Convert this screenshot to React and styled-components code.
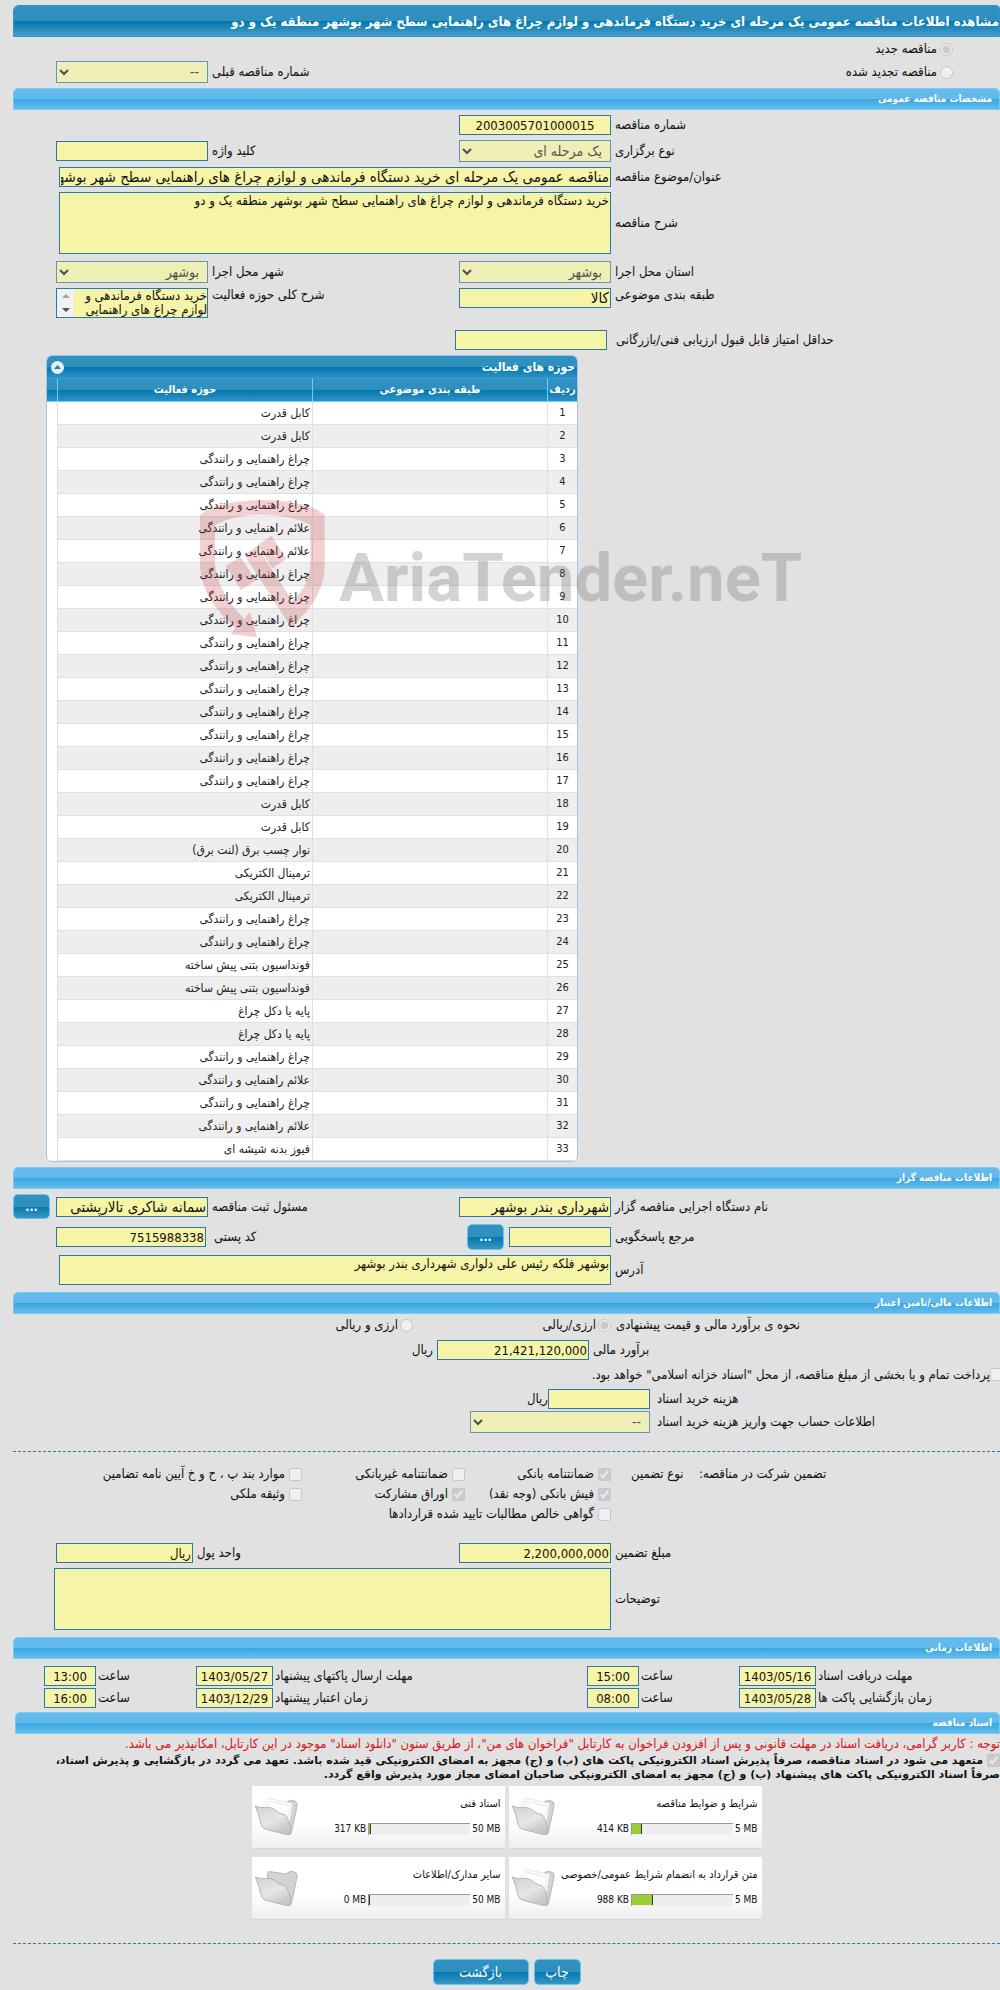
import React, { useId } from "react";
import styled, { createGlobalStyle, css } from "styled-components";

const FONT = `Tahoma, "DejaVu Sans Condensed", "DejaVu Sans", sans-serif`;

const GlobalStyle = createGlobalStyle`
  *, *::before, *::after { box-sizing: border-box; }
  body { margin: 0; background: #e1e1e1; color: #111; font: 13px/14px ${FONT}; }
  input, textarea, select, button { font-family: ${FONT}; }
`;

const Page = styled.main`
  direction: rtl;
  position: relative;
  padding: 5px 0 5px 13px;
  overflow: hidden;
`;

const TitleBar = styled.h1`
  margin: 0;
  height: 32px;
  border: 1px solid #2e93d6;
  border-radius: 6px 4px 0 0;
  background: linear-gradient(#2f92c1 0, #2f8fbd 50%, #0077b0 50%, #4a9dc6 100%);
  color: #fff;
  font-size: 13px;
  font-weight: bold;
  line-height: 32px;
  white-space: nowrap;
`;

const SectionBar = styled.h2`
  margin: 0 0 0 ${(p) => p.$inset || 0}px;
  height: 22px;
  padding: 0 7px;
  border: 1px solid #6fcdf7;
  border-radius: 5px 5px 0 0;
  background: linear-gradient(#66bcec 0, #62b8e8 50%, #36a6e2 50%, #66bcea 100%);
  color: #fff;
  font-size: 10px;
  font-weight: bold;
  line-height: 20px;
`;

const Form = styled.section`
  display: flex;
  flex-direction: column;
  gap: ${(p) => p.$gap ?? 5}px;
  padding: ${(p) => p.$pad || "5px 0"};
`;

const Row = styled.div`
  display: grid;
  grid-template-columns: minmax(0, 385fr) 152px minmax(0, 243fr) 152px 39px;
  column-gap: 4px;
  align-items: ${(p) => p.$align || "center"};
  padding-bottom: ${(p) => p.$after || 0}px;
`;

const LabelText = styled.label`
  text-align: left;
  white-space: nowrap;
  padding-left: ${(p) => p.$pad || 0}px;
`;

const Line = styled.div`
  display: flex;
  align-items: center;
  min-height: ${(p) => p.$h || 20}px;
`;

const LineLabel = styled.label`
  flex: 0 0 ${(p) => p.$w}px;
  text-align: left;
  white-space: nowrap;
  margin-left: ${(p) => p.$gap ?? 4}px;
`;

const field = css`
  border: 1px solid #2878a8;
  border-radius: 0;
  background: #f6f4a6;
  color: #111;
  outline: none;
  margin: 0;
`;

const Input = styled.input`
  ${field}
  width: ${(p) => (p.$w ? p.$w + "px" : "100%")};
  height: 20px;
  padding: 0 1px;
  font-size: ${(p) => (p.$text ? 15 : 13)}px;
  text-align: ${(p) => p.$align || "right"};
  justify-self: end;
`;

const Area = styled.textarea`
  ${field}
  display: block;
  width: 100%;
  height: ${(p) => p.$h}px;
  padding: 1px;
  font-size: 13px;
  line-height: 14px;
  resize: none;
  overflow: hidden;
`;

const Scroller = styled.div`
  ${field}
  display: flex;
  height: 30px;
`;

const ScrollText = styled(Area)`
  flex: 1;
  min-width: 0;
  border: 0;
  padding: 0;
`;

const Arrows = styled.div`
  flex: 0 0 17px;
  display: flex;
  flex-direction: column;
  background: #f1f1f1;
`;

const Arrow = styled.button`
  flex: 1;
  padding: 0;
  border: 0;
  background: none;
  display: grid;
  place-items: center;
`;

const Select = styled.select`
  ${field}
  width: ${(p) => (p.$w ? p.$w + "px" : "100%")};
  height: 22px;
  padding: 0 4px 0 1px;
  font-size: 14px;
  opacity: 0.7;
`;

const Wide = styled.div`
  grid-column: span 3;
  margin-left: ${(p) => p.$inset ?? 3}px;
`;

const Pair = styled.div`
  display: flex;
  align-items: center;
  gap: 5px;
`;

const Button = styled.button`
  width: ${(p) => p.$w}px;
  height: ${(p) => p.$h || 26}px;
  padding: 0;
  border: 1px solid #62c4ef;
  border-radius: 5px;
  background: linear-gradient(#2f92c1 0, #2f8fbd 50%, #0077b0 50%, #3a97c4 100%);
  color: #fff;
  font-size: ${(p) => (p.$dots ? 12 : 14)}px;
  font-weight: ${(p) => (p.$dots ? "bold" : "normal")};
  justify-self: end;
`;

const Tick = styled.input`
  flex: none;
  width: 13px;
  height: 13px;
  margin: 0;
`;

const Choice = styled.label`
  display: flex;
  align-items: center;
  gap: ${(p) => p.$gap ?? 4}px;
  white-space: nowrap;
`;

const Kind = styled(Form)`
  padding: 0 0 5px;
`;

const KindLine = styled(Line)`
  padding-right: 47px;
`;

const KindRow = styled(Row)`
  grid-template-columns: minmax(0, 537fr) minmax(0, 247fr) 152px 39px;
`;

const Indent = styled.div`
  padding-right: 47px;
`;

const FixedCell = styled.div`
  flex: 0 0 ${(p) => p.$w}px;
`;

const Unit = styled.span`
  margin-right: ${(p) => p.$gap}px;
`;

const Overhang = styled.div`
  margin-right: -3px;
`;

const Stack = styled.div`
  display: flex;
  flex-direction: column;
  gap: 2px;
`;

const Guarantee = styled.section`
  display: flex;
  line-height: 20px;
`;

const Kinds = styled.div`
  flex: 1;
  display: grid;
  grid-template-columns: 146px 163px 1fr;
  grid-auto-rows: 20px;
  & > label:last-child { grid-column: span 3; }
`;

const Shifted = styled.div`
  grid-column: span 2;
  display: flex;
  align-items: center;
  justify-content: flex-end;
  gap: 4px;
`;

const Divider = styled.hr`
  margin: ${(p) => p.$m};
  border: 0;
  border-top: 1px dashed #2a7ca5;
`;

/* activity table */
const Panel = styled.section`
  width: 532px;
  margin: 0 auto 5px 33px;
  border: 1px solid #a3c7e2;
  border-radius: 6px;
  background: #fff;
  overflow: hidden;
`;

const blue = "linear-gradient(#2f92c1 0, #2f8fbd 50%, #0077b0 50%, #2f92c4 100%)";

const PanelHead = styled.header`
  display: flex;
  align-items: center;
  justify-content: space-between;
  height: 22px;
  padding: 0 2px 0 4px;
  background: ${blue};
  color: #fff;
  font-size: 12px;
  font-weight: bold;
`;

const Collapse = styled.button`
  width: 13px;
  height: 13px;
  padding: 0;
  border: 0;
  border-radius: 50%;
  background: #e6eef8;
  display: grid;
  place-items: center;
`;

const Grid = styled.table`
  width: 100%;
  table-layout: fixed;
  border-collapse: separate;
  border-spacing: 0;
`;

const Th = styled.th`
  height: 24px;
  padding: 0;
  width: ${(p) => (p.$w ? p.$w + "px" : "auto")};
  background: ${blue};
  color: #fff;
  font-size: 11px;
  border-top: 1px solid #3a9bdc;
  border-bottom: 1px solid #6fcdf7;
  border-left: ${(p) => (p.$last ? "0" : "1px solid #6fcdf7")};
  white-space: nowrap;
`;

const Tr = styled.tr`
  background: #fff;
  &:nth-child(even) td:not(:last-child) { background: #eee; }
`;

const Td = styled.td`
  height: 23px;
  padding: 0 2px;
  font-size: ${(p) => (p.$center ? 11 : 12)}px;
  text-align: ${(p) => (p.$center ? "center" : "right")};
  border-bottom: ${(p) => (p.$last ? "0" : "1px solid #e0e0e0")};
  border-left: ${(p) => (p.$last ? "0" : "1px solid #e0e0e0")};
  color: #222;
`;

/* schedule */
const TimeRow = styled.div`
  display: grid;
  grid-template-columns: minmax(0, 182fr) 77px minmax(0, 96fr) 52px minmax(0, 310fr) 77px minmax(0, 96fr) 52px 29px;
  column-gap: 2px;
  align-items: center;
`;

const Notice = styled.p`
  margin: 0;
  line-height: 20px;
  color: #d8141c;
  white-space: nowrap;
`;

const Commitment = styled.label`
  display: block;
  padding-bottom: 4px;
  font: bold 11px/14px "DejaVu Sans", sans-serif;
`;

const CommitTick = styled(Tick)`
  vertical-align: top;
  margin-left: 4px;
`;

const Cards = styled.div`
  display: flex;
  flex-wrap: wrap;
  justify-content: center;
  gap: 8px 4px;
  max-width: 512px;
  margin: 0 auto;
`;

const Card = styled.article`
  display: flex;
  justify-content: space-between;
  width: 253px;
  height: 63px;
  padding: 0 4px 0 2px;
  background: linear-gradient(#fff 60%, #eee);
  border-bottom: 1px solid #d8d8d8;
  font-size: 11px;
`;

const CardBody = styled.div`
  flex: 1;
  display: flex;
  flex-direction: column;
  gap: 12px;
  padding-top: 11px;
  white-space: nowrap;
`;

const Usage = styled.div`
  direction: ltr;
  display: flex;
  align-items: center;
  justify-content: flex-end;
  gap: 2px;
  font-size: 10px;
  line-height: 12px;
`;

const Track = styled.div`
  width: 102px;
  height: 12px;
  border-top: 1px solid #999;
  border-left: 1px solid #999;
  background: #eee;
`;

const Fill = styled.div`
  height: 10px;
  background: #9acd32;
  border-right: 1px solid #333;
`;

const FolderSlot = styled.div`
  padding-top: 9px;
`;

const Actions = styled.footer`
  display: flex;
  justify-content: center;
  gap: 5px;
`;

/* watermark over the page */
const Watermark = styled.div`
  position: absolute;
  top: 495px;
  left: 195px;
  direction: ltr;
  display: flex;
  pointer-events: none;
`;

const WatermarkText = styled.span`
  margin-left: 10px;
  padding-top: 47px;
  font: bold 67px/72px Roboto, sans-serif;
  color: rgba(110, 110, 110, 0.3);
`;

const ACTIVITIES = [
  "کابل قدرت", "کابل قدرت", "چراغ راهنمایی و رانندگی", "چراغ راهنمایی و رانندگی",
  "چراغ راهنمایی و رانندگی", "علائم راهنمایی و رانندگی", "علائم راهنمایی و رانندگی",
  "چراغ راهنمایی و رانندگی", "چراغ راهنمایی و رانندگی", "چراغ راهنمایی و رانندگی",
  "چراغ راهنمایی و رانندگی", "چراغ راهنمایی و رانندگی", "چراغ راهنمایی و رانندگی",
  "چراغ راهنمایی و رانندگی", "چراغ راهنمایی و رانندگی", "چراغ راهنمایی و رانندگی",
  "چراغ راهنمایی و رانندگی", "کابل قدرت", "کابل قدرت", "نوار چسب برق (لنت برق)",
  "ترمینال الکتریکی", "ترمینال الکتریکی", "چراغ راهنمایی و رانندگی",
  "چراغ راهنمایی و رانندگی", "فونداسیون بتنی پیش ساخته", "فونداسیون بتنی پیش ساخته",
  "پایه یا دکل چراغ", "پایه یا دکل چراغ", "چراغ راهنمایی و رانندگی",
  "علائم راهنمایی و رانندگی", "چراغ راهنمایی و رانندگی", "علائم راهنمایی و رانندگی",
  "فیوز بدنه شیشه ای",
];

const DOCUMENTS = [
  { title: "شرایط و ضوابط مناقصه", used: "414 KB", limit: "5 MB", percent: 10, full: true },
  { title: "اسناد فنی", used: "317 KB", limit: "50 MB", percent: 2, full: true },
  { title: "متن قرارداد به انضمام شرایط عمومی/خصوصی", used: "988 KB", limit: "5 MB", percent: 21, full: true },
  { title: "سایر مدارک/اطلاعات", used: "0 MB", limit: "50 MB", percent: 1, full: false },
];

const TextField = ({ label, value = "", labelPad, ...rest }) => {
  const id = useId();
  return (
    <>
      <LabelText htmlFor={id} $pad={labelPad}>{label}</LabelText>
      <Input id={id} defaultValue={value} readOnly {...rest} />
    </>
  );
};

const SelectField = ({ label, value }) => {
  const id = useId();
  return (
    <>
      <LabelText htmlFor={id}>{label}</LabelText>
      <Select id={id} disabled defaultValue={value}><option>{value}</option></Select>
    </>
  );
};

const WideArea = ({ label, value = "", h, inset }) => {
  const id = useId();
  return (
    <>
      <LabelText htmlFor={id}>{label}</LabelText>
      <Wide $inset={inset}><Area id={id} $h={h} defaultValue={value} readOnly /></Wide>
    </>
  );
};

const Option = ({ type = "checkbox", label, gap, ...rest }) => (
  <Choice $gap={gap}>
    <Tick type={type} disabled {...rest} />
    {label}
  </Choice>
);

const Folder = ({ full }) => (
  <svg width="45" height="45" viewBox="0 0 135 135" aria-hidden="true">
    <defs>
      <linearGradient id="folderFront" x1="0" y1="0" x2="0.6" y2="1">
        <stop offset="0" stopColor="#d2d2d2" />
        <stop offset="0.6" stopColor="#e6e6e6" />
        <stop offset="1" stopColor="#c6c6c6" />
      </linearGradient>
    </defs>
    <path d="M40 23 Q42 14 50 17 L90 23 Q98 26 102 19 Q112 12 126 20 Q132 26 128 38 L113 110 Q111 120 104 118 L45 90 Z" fill="#d3d3d3" stroke="#adadad" strokeWidth="2.5" />
    {full && <path d="M30 28 L44 10 L116 25 L105 94 L30 60 Z" fill="#fdfdfd" stroke="#d8d8d8" strokeWidth="2" />}
    {full && <path d="M36 36 L48 19 L109 33 L98 84" fill="none" stroke="#dedede" strokeWidth="2" />}
    <path d="M4 33 Q20 40 34 38 Q54 34 70 50 Q82 58 93 59 Q106 74 110 98 L107 116 Q104 121 96 118 L36 103 Q24 100 21 88 Q16 60 4 33 Z" fill="url(#folderFront)" stroke="#a9a9a9" strokeWidth="2.5" />
  </svg>
);

const Shield = () => (
  <svg width="134" height="144" viewBox="0 0 402 432" fill="rgba(190,40,50,0.22)" aria-hidden="true">
    <path d="M15 60 Q60 18 202 15 Q345 18 389 60 V220 Q386 310 288 397 L148 180 L185 153 L292 318 Q346 270 346 200 V90 Q290 60 202 60 Q115 60 60 90 V210 Q68 290 148 372 L165 350 L186 426 L107 418 L122 398 Q25 320 15 220 Z" />
    <path d="M92 213 L136 186 L183 255 L138 285 Z" />
    <path d="M187 150 L230 122 L274 193 L232 220 Z" />
  </svg>
);

export default function App() {
  return (
    <>
      <GlobalStyle />
      <Page>
        <TitleBar>مشاهده اطلاعات مناقصه عمومی یک مرحله ای خرید دستگاه فرماندهی و لوازم چراغ های راهنمایی سطح شهر بوشهر منطقه یک و دو</TitleBar>
        <Kind $gap={0}>
          <KindLine $h={24}><Option type="radio" name="kind" defaultChecked label="مناقصه جدید" gap={3} /></KindLine>
          <KindRow>
            <Indent><Option type="radio" name="kind" label="مناقصه تجدید شده" gap={3} /></Indent>
            <SelectField label="شماره مناقصه قبلی" value="--" />
          </KindRow>
        </Kind>

        <SectionBar>مشخصات مناقصه عمومی</SectionBar>
        <Form>
          <Row><TextField label="شماره مناقصه" value="2003005701000015" $align="center" /></Row>
          <Row>
            <SelectField label="نوع برگزاری" value="یک مرحله ای" />
            <TextField label="کلید واژه" />
          </Row>
          <Row>
            <LabelText htmlFor="subject">عنوان/موضوع مناقصه</LabelText>
            <Wide><Input id="subject" $text readOnly defaultValue="مناقصه عمومی یک مرحله ای خرید دستگاه فرماندهی و لوازم چراغ های راهنمایی سطح شهر بوشهر منطقه یک و دو" /></Wide>
          </Row>
          <Row $after={2}><WideArea label="شرح مناقصه" h={62} value="خرید دستگاه فرماندهی و لوازم چراغ های راهنمایی سطح شهر بوشهر منطقه یک و دو" /></Row>
          <Row>
            <SelectField label="استان محل اجرا" value="بوشهر" />
            <SelectField label="شهر محل اجرا" value="بوشهر" />
          </Row>
          <Row $align="start" $after={7}>
            <TextField label="طبقه بندی موضوعی" value="کالا" $text />
            <LabelText htmlFor="scope">شرح کلی حوزه فعالیت</LabelText>
            <Scroller>
              <ScrollText id="scope" $h={28} readOnly defaultValue="خرید دستگاه فرماندهی و لوازم چراغ های راهنمایی سطح شهر بوشهر منطقه یک و دو" />
              <Arrows>
                <Arrow type="button" aria-label="بالا"><svg width="8" height="4" viewBox="0 0 8 4" aria-hidden="true"><path d="M0 4 L4 0 L8 4 Z" fill="#a3a3a3" /></svg></Arrow>
                <Arrow type="button" aria-label="پایین"><svg width="8" height="4" viewBox="0 0 8 4" aria-hidden="true"><path d="M0 0 L4 4 L8 0 Z" fill="#505050" /></svg></Arrow>
              </Arrows>
            </Scroller>
          </Row>
          <Line>
            <LineLabel htmlFor="minimum" $w={384} $gap={9}>حداقل امتیاز قابل قبول ارزیابی فنی/بازرگانی</LineLabel>
            <Input id="minimum" readOnly $w={152} />
          </Line>
        </Form>

        <Panel>
          <PanelHead>
            حوزه های فعالیت
            <Collapse type="button" aria-label="بستن">
              <svg width="7" height="4" viewBox="0 0 7 4" aria-hidden="true"><path d="M0 4 L3.5 0 L7 4 Z" fill="#217fb0" /></svg>
            </Collapse>
          </PanelHead>
          <Grid>
            <thead>
              <tr><Th $w={30}>ردیف</Th><Th $w={235}>طبقه بندی موضوعی</Th><Th>حوزه فعالیت</Th><Th $w={10} $last /></tr>
            </thead>
            <tbody>
              {ACTIVITIES.map((name, i) => (
                <Tr key={i}><Td $center>{i + 1}</Td><Td /><Td>{name}</Td><Td $last /></Tr>
              ))}
            </tbody>
          </Grid>
        </Panel>

        <SectionBar>اطلاعات مناقصه گزار</SectionBar>
        <Form $pad="5px 0 7px">
          <Row>
            <TextField label="نام دستگاه اجرایی مناقصه گزار" value="شهرداری بندر بوشهر" $text />
            <TextField label="مسئول ثبت مناقصه" value="سمانه شاکری تالارپشتی" $text />
            <Button type="button" $w={37} $h={25} $dots>...</Button>
          </Row>
          <Row>
            <LabelText htmlFor="contact">مرجع پاسخگویی</LabelText>
            <Pair>
              <Input id="contact" readOnly $w={102} />
              <Button type="button" $w={37} $dots>...</Button>
            </Pair>
            <TextField label="کد پستی" value="7515988338" labelPad={2} $w={150} />
          </Row>
          <Row><WideArea label="آدرس" h={30} value="بوشهر فلکه رئیس علی دلواری شهرداری بندر بوشهر" /></Row>
        </Form>

        <SectionBar>اطلاعات مالی/تامین اعتبار</SectionBar>
        <Form $pad="1px 0 18px">
          <Line>
            <LineLabel as="span" $w={384} $gap={5}>نحوه ی برآورد مالی و قیمت پیشنهادی</LineLabel>
            <FixedCell $w={198}><Option type="radio" name="currency" defaultChecked label="ارزی/ریالی" gap={2} /></FixedCell>
            <Option type="radio" name="currency" label="ارزی و ریالی" gap={2} />
          </Line>
          <Line>
            <LineLabel htmlFor="estimate" $w={407}>برآورد مالی</LineLabel>
            <Input id="estimate" readOnly $w={152} defaultValue="21,421,120,000" />
            <Unit $gap={4}>ریال</Unit>
          </Line>
          <Line $h={19}><Overhang><Option label={'پرداخت تمام و یا بخشی از مبلغ مناقصه، از محل "اسناد خزانه اسلامی" خواهد بود.'} gap={0} /></Overhang></Line>
          <Stack>
            <Line>
              <LineLabel htmlFor="fee" $w={343} $gap={7}>هزینه خرید اسناد</LineLabel>
              <Input id="fee" readOnly $w={102} />
              <Unit $gap={0}>ریال</Unit>
            </Line>
            <Line>
              <LineLabel htmlFor="account" $w={343} $gap={7}>اطلاعات حساب جهت واریز هزینه خرید اسناد</LineLabel>
              <Select id="account" disabled $w={180}><option>--</option></Select>
            </Line>
          </Stack>
        </Form>
        <Divider $m="0 0 12px" />

        <Guarantee>
          <LineLabel as="span" $w={301} $gap={0}>تضمین شرکت در مناقصه:</LineLabel>
          <LineLabel as="span" $w={68} $gap={20}>نوع تضمین</LineLabel>
          <Kinds>
            <Option defaultChecked label="ضمانتنامه بانکی" />
            <Option label="ضمانتنامه غیربانکی" />
            <Option label="موارد بند پ ، ح و خ آیین نامه تضامین" />
            <Option defaultChecked label="فیش بانکی (وجه نقد)" />
            <Option defaultChecked label="اوراق مشارکت" />
            <Option label="وثیقه ملکی" />
            <Option label="گواهی خالص مطالبات تایید شده قراردادها" />
          </Kinds>
        </Guarantee>
        <Form $pad="19px 0 7px">
          <Row>
            <TextField label="مبلغ تضمین" value="2,200,000,000" />
            <Shifted>
              <label htmlFor="unit">واحد پول</label>
              <Input id="unit" readOnly $w={137} defaultValue="ریال" />
            </Shifted>
          </Row>
          <Row><WideArea label="توضیحات" h={62} inset={-2} /></Row>
        </Form>

        <SectionBar>اطلاعات زمانی</SectionBar>
        <Form $gap={2} $pad="7px 0 4px">
          <TimeRow>
            <TextField label="مهلت دریافت اسناد" value="1403/05/16" $align="center" />
            <TextField label="ساعت" value="15:00" $align="center" />
            <TextField label="مهلت ارسال پاکتهای پیشنهاد" value="1403/05/27" $align="center" />
            <TextField label="ساعت" value="13:00" $align="center" />
          </TimeRow>
          <TimeRow>
            <TextField label="زمان بازگشایی پاکت ها" value="1403/05/28" $align="center" />
            <TextField label="ساعت" value="08:00" $align="center" />
            <TextField label="زمان اعتبار پیشنهاد" value="1403/12/29" $align="center" />
            <TextField label="ساعت" value="16:00" $align="center" />
          </TimeRow>
        </Form>

        <SectionBar $inset={2}>اسناد مناقصه</SectionBar>
        <Notice>توجه : کاربر گرامی، دریافت اسناد در مهلت قانونی و پس از افزودن فراخوان به کارتابل "فراخوان های من"، از طریق ستون "دانلود اسناد" موجود در این کارتابل، امکانپذیر می باشد.</Notice>
        <Commitment>
          <CommitTick type="checkbox" disabled defaultChecked />
          متعهد می شود در اسناد مناقصه، صرفاً پذیرش اسناد الکترونیکی پاکت های (ب) و (ج) مجهز به امضای الکترونیکی قید شده باشد. تعهد می گردد در بازگشایی و پذیرش اسناد،
          <br />
          صرفاً اسناد الکترونیکی پاکت های پیشنهاد (ب) و (ج) مجهز به امضای الکترونیکی صاحبان امضای مجاز مورد پذیرش واقع گردد.
        </Commitment>
        <Cards>
          {DOCUMENTS.map((d) => (
            <Card key={d.title}>
              <CardBody>
                <span>{d.title}</span>
                <Usage>
                  <span>{d.used}</span>
                  <Track><Fill style={{ width: `${d.percent}%` }} /></Track>
                  <span>{d.limit}</span>
                </Usage>
              </CardBody>
              <FolderSlot><Folder full={d.full} /></FolderSlot>
            </Card>
          ))}
        </Cards>
        <Divider $m="23px 0 15px" />
        <Actions>
          <Button type="button" $w={47}>چاپ</Button>
          <Button type="button" $w={96}>بازگشت</Button>
        </Actions>

        <Watermark>
          <Shield />
          <WatermarkText>AriaTender.neT</WatermarkText>
        </Watermark>
      </Page>
    </>
  );
}
